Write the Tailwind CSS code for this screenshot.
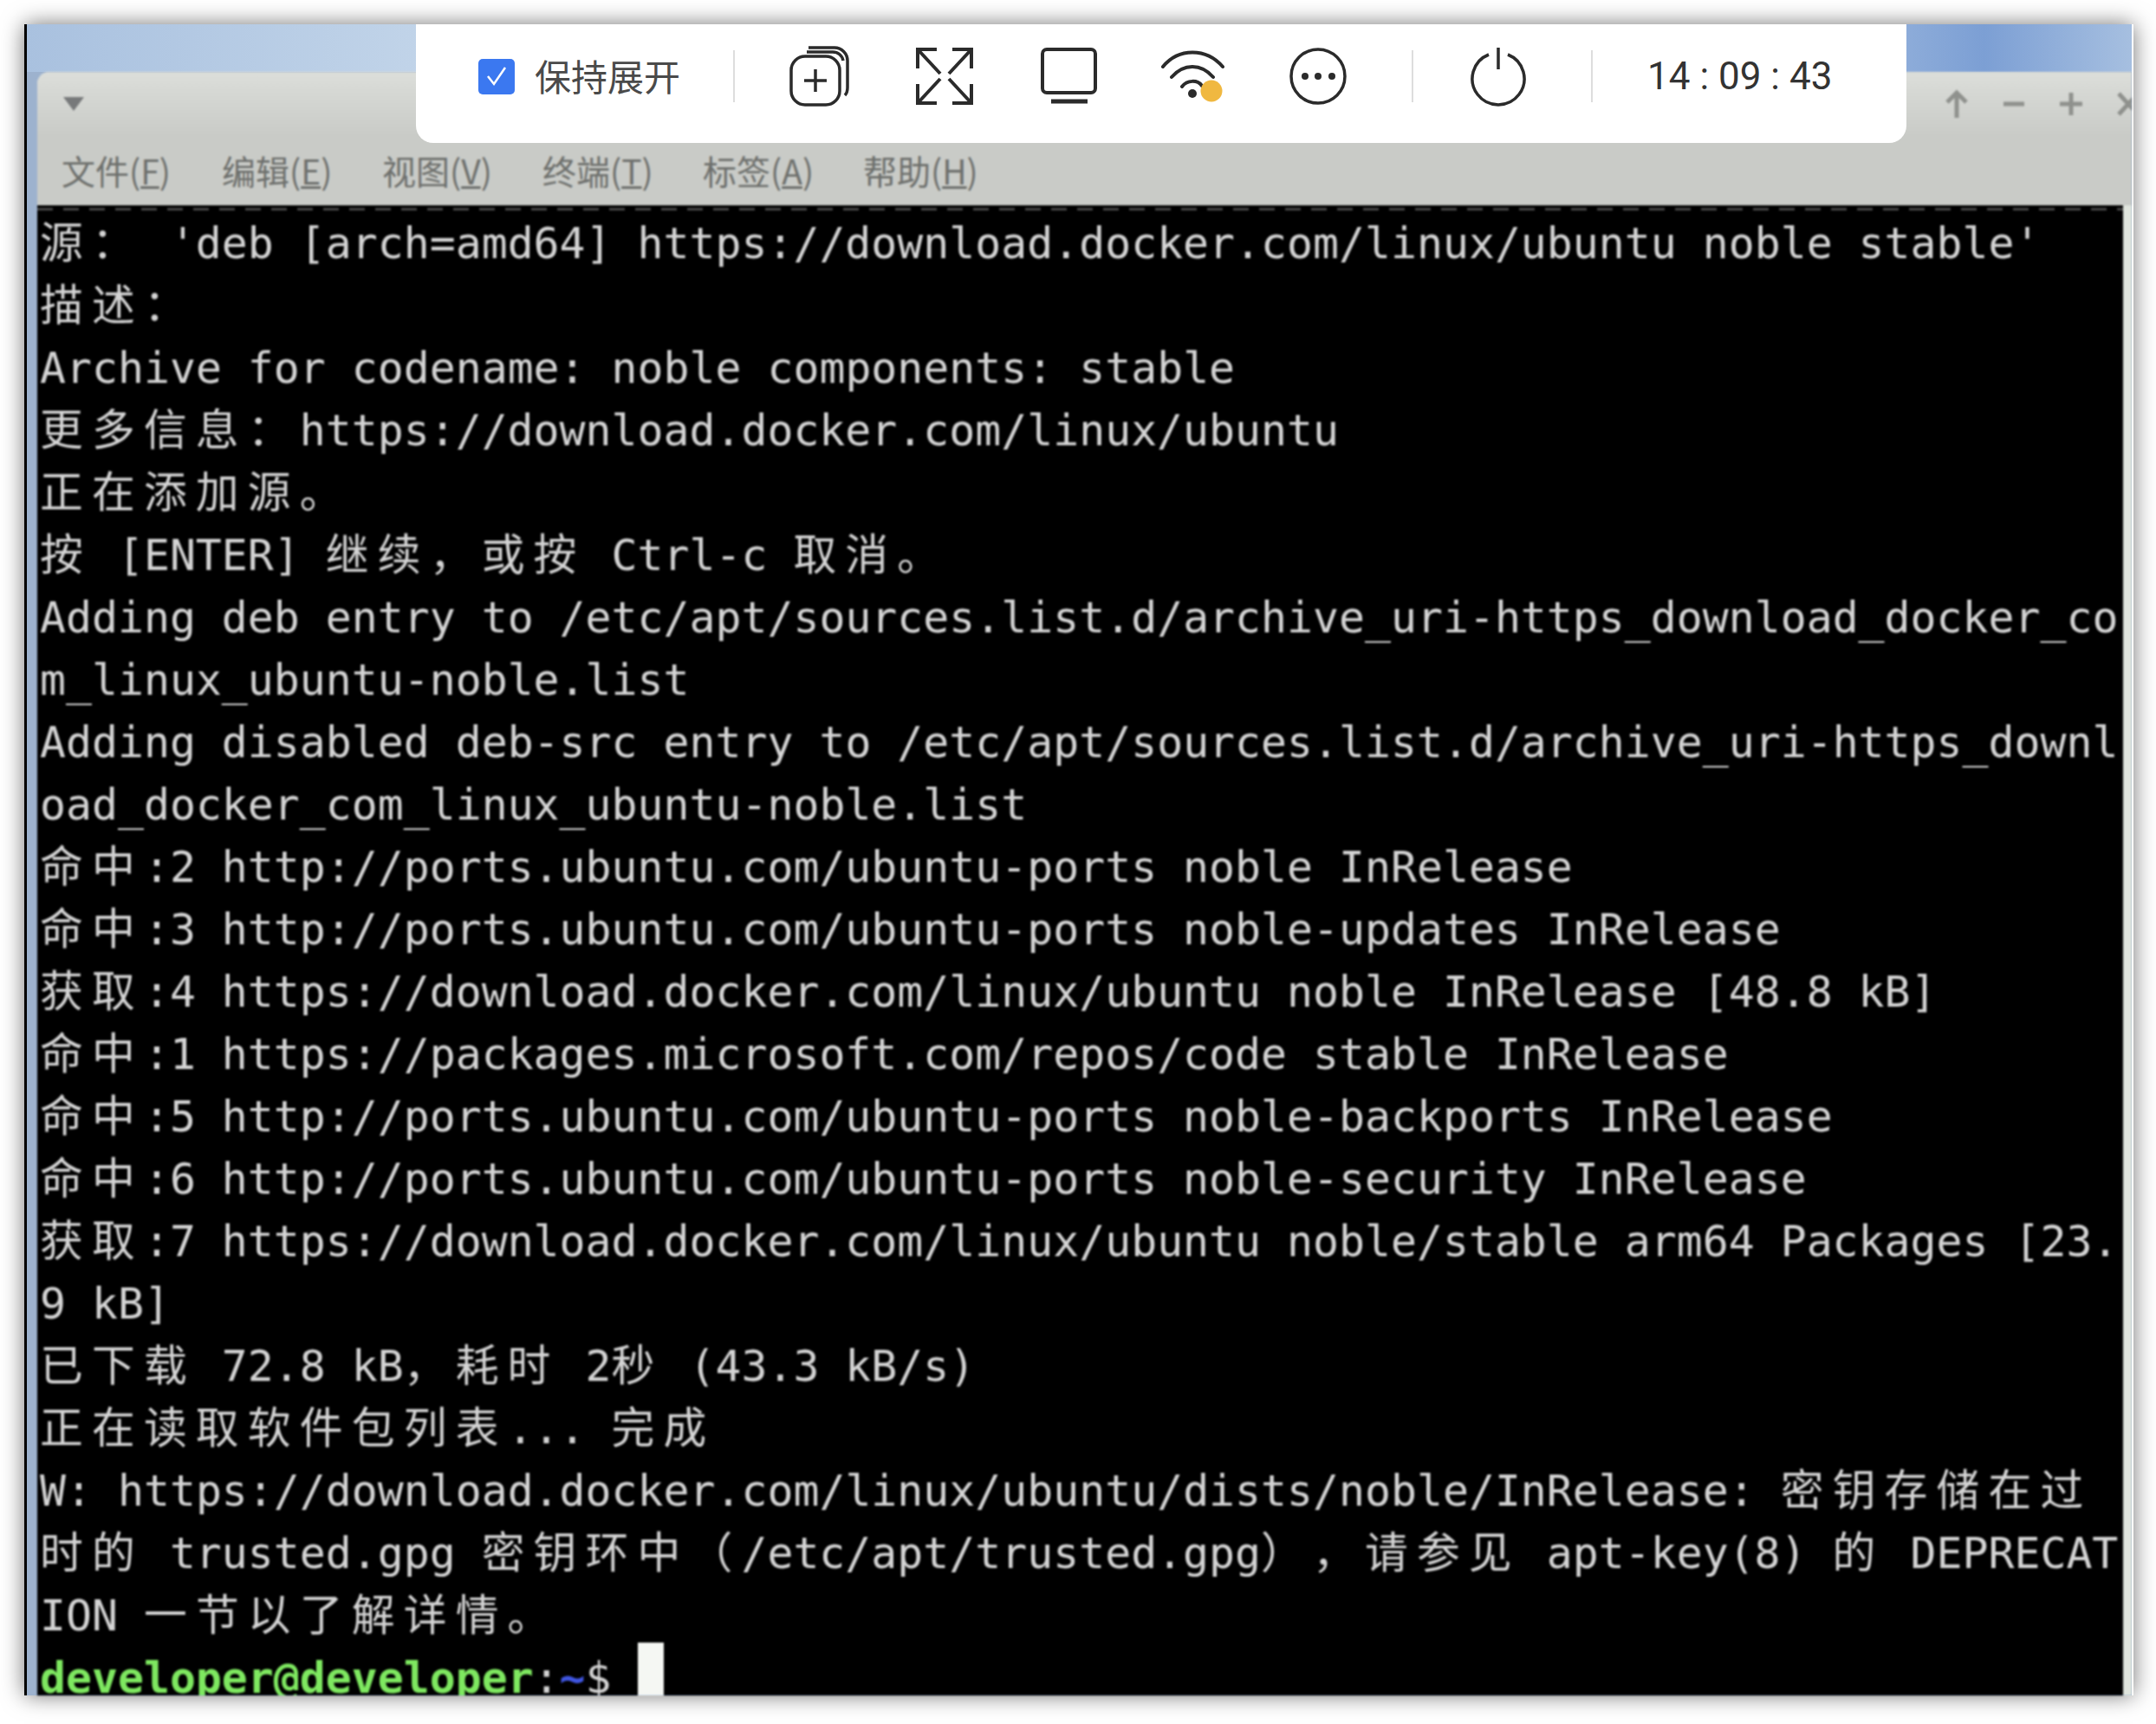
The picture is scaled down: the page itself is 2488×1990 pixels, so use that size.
<!DOCTYPE html>
<html lang="zh">
<head>
  <meta charset="UTF-8">
  <title>Terminal</title>
  <script src="https://cdn.jsdelivr.net/npm/@tailwindcss/browser@4"></script>
</head>
<body class="bg-white">
  <div class="relative w-[2488px] h-[1990px] overflow-hidden pt-[28px] pl-[28px] bg-white">
    <!-- window -->
    <div class="flex flex-col w-[2434px] h-[1929px] border-l-[3px] border-l-black border-r-[2px] border-r-white bg-[#9db2ce] shadow-[0_0_24px_rgba(0,0,0,0.55)]">
      <!-- desktop behind the title bar -->
      <div class="h-[55px] shrink-0 bg-[linear-gradient(90deg,#a9c1df_0%,#c9daec_25%,#d3e0ef_50%,#b7cce6_80%,#7c9fd4_93%,#a6bfe0_100%)]"></div>
      <div class="flex flex-col flex-1 min-h-0 ml-[12px] overflow-hidden rounded-tl-[14px] bg-[#e0e5dd] blur-[1px]">
        <div class="h-[74px] shrink-0 flex items-center justify-between pl-[30px] bg-[linear-gradient(180deg,#dcdeda_0%,#c9cbc7_100%)]">
          <svg width="24" height="16" viewBox="0 0 24 16"><path d="M0 0H24L12 16Z" fill="#77797a"/></svg>
          <div class="flex items-center gap-[34px] mr-[-12px] text-[#8f918d]">
            <svg width="32" height="36" viewBox="0 0 32 36" fill="none" stroke="currentColor" stroke-width="5"><path d="M16 34V6M5 16L16 5L27 16"/></svg>
            <svg width="32" height="36" viewBox="0 0 32 36" fill="none" stroke="currentColor" stroke-width="5"><path d="M4 18H28"/></svg>
            <svg width="32" height="36" viewBox="0 0 32 36" fill="none" stroke="currentColor" stroke-width="5"><path d="M3 18H29M16 5V31"/></svg>
            <svg width="32" height="36" viewBox="0 0 32 36" fill="none" stroke="currentColor" stroke-width="5"><path d="M5 6L27 30M27 6L5 30"/></svg>
          </div>
        </div>
        <!-- menu -->
        <div class="h-[80px] shrink-0 flex items-center pl-[28px] pb-[2px] gap-[62px] bg-[#c9cbc7] text-[39px] text-[#6e706d] font-['Noto_Sans_CJK_SC',sans-serif]">
          <span class="w-[123px] whitespace-nowrap">文件(<u>F</u>)</span>
          <span class="w-[123px] whitespace-nowrap">编辑(<u>E</u>)</span>
          <span class="w-[123px] whitespace-nowrap">视图(<u>V</u>)</span>
          <span class="w-[123px] whitespace-nowrap">终端(<u>T</u>)</span>
          <span class="w-[123px] whitespace-nowrap">标签(<u>A</u>)</span>
          <span class="w-[123px] whitespace-nowrap">帮助(<u>H</u>)</span>
        </div>
        <!-- terminal -->
        <div class="flex-1 min-h-0 mr-[10px] overflow-hidden bg-black">
          <div class="h-[3px] mt-[3px] bg-[repeating-linear-gradient(90deg,#444_0,#444_18px,transparent_18px,transparent_30px)]"></div>
          <div id="term" class="pl-[3px] pt-[2px] text-[49.8px] leading-[72px] text-[#d4d4d4] font-['DejaVu_Sans_Mono','Noto_Sans_CJK_SC',monospace]"></div>
        </div>
      </div>
    </div>

    <!-- floating toolbar -->
    <div class="absolute left-[480px] top-[28px] w-[1720px] h-[137px] pb-[17px] flex items-center rounded-b-[20px] bg-white text-[#333]">
      <div class="ml-[72px] w-[42px] h-[41px] rounded-[5px] bg-[#3b78f0] flex items-center justify-center">
        <svg width="26" height="26" viewBox="0 0 26 26" fill="none" stroke="white" stroke-width="2.5"><path d="M3 13L10 22L23 3"/></svg>
      </div>
      <span class="ml-[23px] mb-[2px] text-[42px] leading-none text-[#4a4a4a] whitespace-nowrap font-['Noto_Sans_CJK_SC',sans-serif]">保持展开</span>
      <div class="ml-[61px] w-[2px] h-[60px] bg-[#ddd]"></div>
      <svg class="ml-[63px]" width="69" height="70" viewBox="0 0 69 70" fill="none" stroke="#2b2b2b" stroke-width="3.5">
        <rect x="2" y="12" width="56" height="56" rx="16"/>
        <path d="M22 2H52a15 15 0 0 1 15 15V48c0 4-1 7-3 9M20 7H50c6 0 11 4 12 10"/>
        <path d="M30 27V53M17 40H43"/>
      </svg>
      <svg class="ml-[77px]" width="66" height="70" viewBox="0 0 66 70" fill="none" stroke="#2b2b2b" stroke-width="4">
        <path d="M24 4H2V26M2 4L28 32M42 4H64V26M64 4L38 32M2 44V66H24M2 66L28 38M64 44V66H42M64 66L38 38"/>
      </svg>
      <svg class="ml-[78px]" width="65" height="70" viewBox="0 0 65 70" fill="none" stroke="#2b2b2b" stroke-width="4">
        <rect x="2" y="4" width="61" height="50" rx="5"/>
        <path d="M12 64H54" stroke-width="5"/>
      </svg>
      <svg class="ml-[74px]" width="73" height="70" viewBox="0 0 73 70" fill="none" stroke="#2b2b2b" stroke-width="4" stroke-linecap="round">
        <path d="M2 24C20 2 52 2 71 24M12 36C26 20 46 20 60 36M24 47C30 39 42 39 47 46"/>
        <circle cx="36" cy="55" r="5" fill="#2b2b2b" stroke="none"/>
        <circle cx="58" cy="52" r="12.5" fill="#f0b840" stroke="none"/>
      </svg>
      <svg class="ml-[75px]" width="66" height="70" viewBox="0 0 66 70" fill="none" stroke="#2b2b2b" stroke-width="3.5">
        <circle cx="33" cy="35" r="31"/>
        <circle cx="18" cy="35" r="4" fill="#2b2b2b" stroke="none"/>
        <circle cx="33" cy="35" r="4" fill="#2b2b2b" stroke="none"/>
        <circle cx="49" cy="35" r="4" fill="#2b2b2b" stroke="none"/>
      </svg>
      <div class="ml-[75px] w-[2px] h-[60px] bg-[#ddd]"></div>
      <svg class="ml-[66px]" width="64" height="70" viewBox="0 0 64 70" fill="none" stroke="#2b2b2b" stroke-width="3.5">
        <path d="M21 10A30 30 0 1 0 43 10M32 2V27"/>
      </svg>
      <div class="ml-[75px] w-[2px] h-[60px] bg-[#ddd]"></div>
      <span class="ml-[63px] text-[44px] leading-none whitespace-nowrap font-['Roboto',sans-serif]">14 : 09 : 43</span>
    </div>
  </div>

  <script>
    const lines = [
      "源： 'deb [arch=amd64] https://download.docker.com/linux/ubuntu noble stable'",
      "描述：",
      "Archive for codename: noble components: stable",
      "更多信息：https://download.docker.com/linux/ubuntu",
      "正在添加源。",
      "按 [ENTER] 继续，或按 Ctrl-c 取消。",
      "Adding deb entry to /etc/apt/sources.list.d/archive_uri-https_download_docker_co",
      "m_linux_ubuntu-noble.list",
      "Adding disabled deb-src entry to /etc/apt/sources.list.d/archive_uri-https_downl",
      "oad_docker_com_linux_ubuntu-noble.list",
      "命中:2 http://ports.ubuntu.com/ubuntu-ports noble InRelease",
      "命中:3 http://ports.ubuntu.com/ubuntu-ports noble-updates InRelease",
      "获取:4 https://download.docker.com/linux/ubuntu noble InRelease [48.8 kB]",
      "命中:1 https://packages.microsoft.com/repos/code stable InRelease",
      "命中:5 http://ports.ubuntu.com/ubuntu-ports noble-backports InRelease",
      "命中:6 http://ports.ubuntu.com/ubuntu-ports noble-security InRelease",
      "获取:7 https://download.docker.com/linux/ubuntu noble/stable arm64 Packages [23.",
      "9 kB]",
      "已下载 72.8 kB，耗时 2秒 (43.3 kB/s)",
      "正在读取软件包列表... 完成",
      "W: https://download.docker.com/linux/ubuntu/dists/noble/InRelease: 密钥存储在过",
      "时的 trusted.gpg 密钥环中（/etc/apt/trusted.gpg），请参见 apt-key(8) 的 DEPRECAT",
      "ION 一节以了解详情。"
    ];

    // CJK glyphs take two terminal cells (30px each)
    function cells(text) {
      return text.replace(/[^\x00-\x7f]/g, c => `<span class="inline-block w-[59.96px] text-left">${c}</span>`);
    }

    const rows = lines.map(l => `<div class="h-[72px] whitespace-pre overflow-hidden">${cells(l)}</div>`);
    rows.push(`<div class="h-[72px] whitespace-pre font-bold"><span class="text-[#7ee860]">developer@developer</span><span class="font-normal">:</span><span class="text-[#3f55e0]">~</span><span class="font-normal">$ </span><span class="relative top-[-5px] inline-block align-top w-[30px] h-[77px] bg-[#f5f7f3]"></span></div>`);
    document.getElementById('term').innerHTML = rows.join('');
  </script>
</body>
</html>
